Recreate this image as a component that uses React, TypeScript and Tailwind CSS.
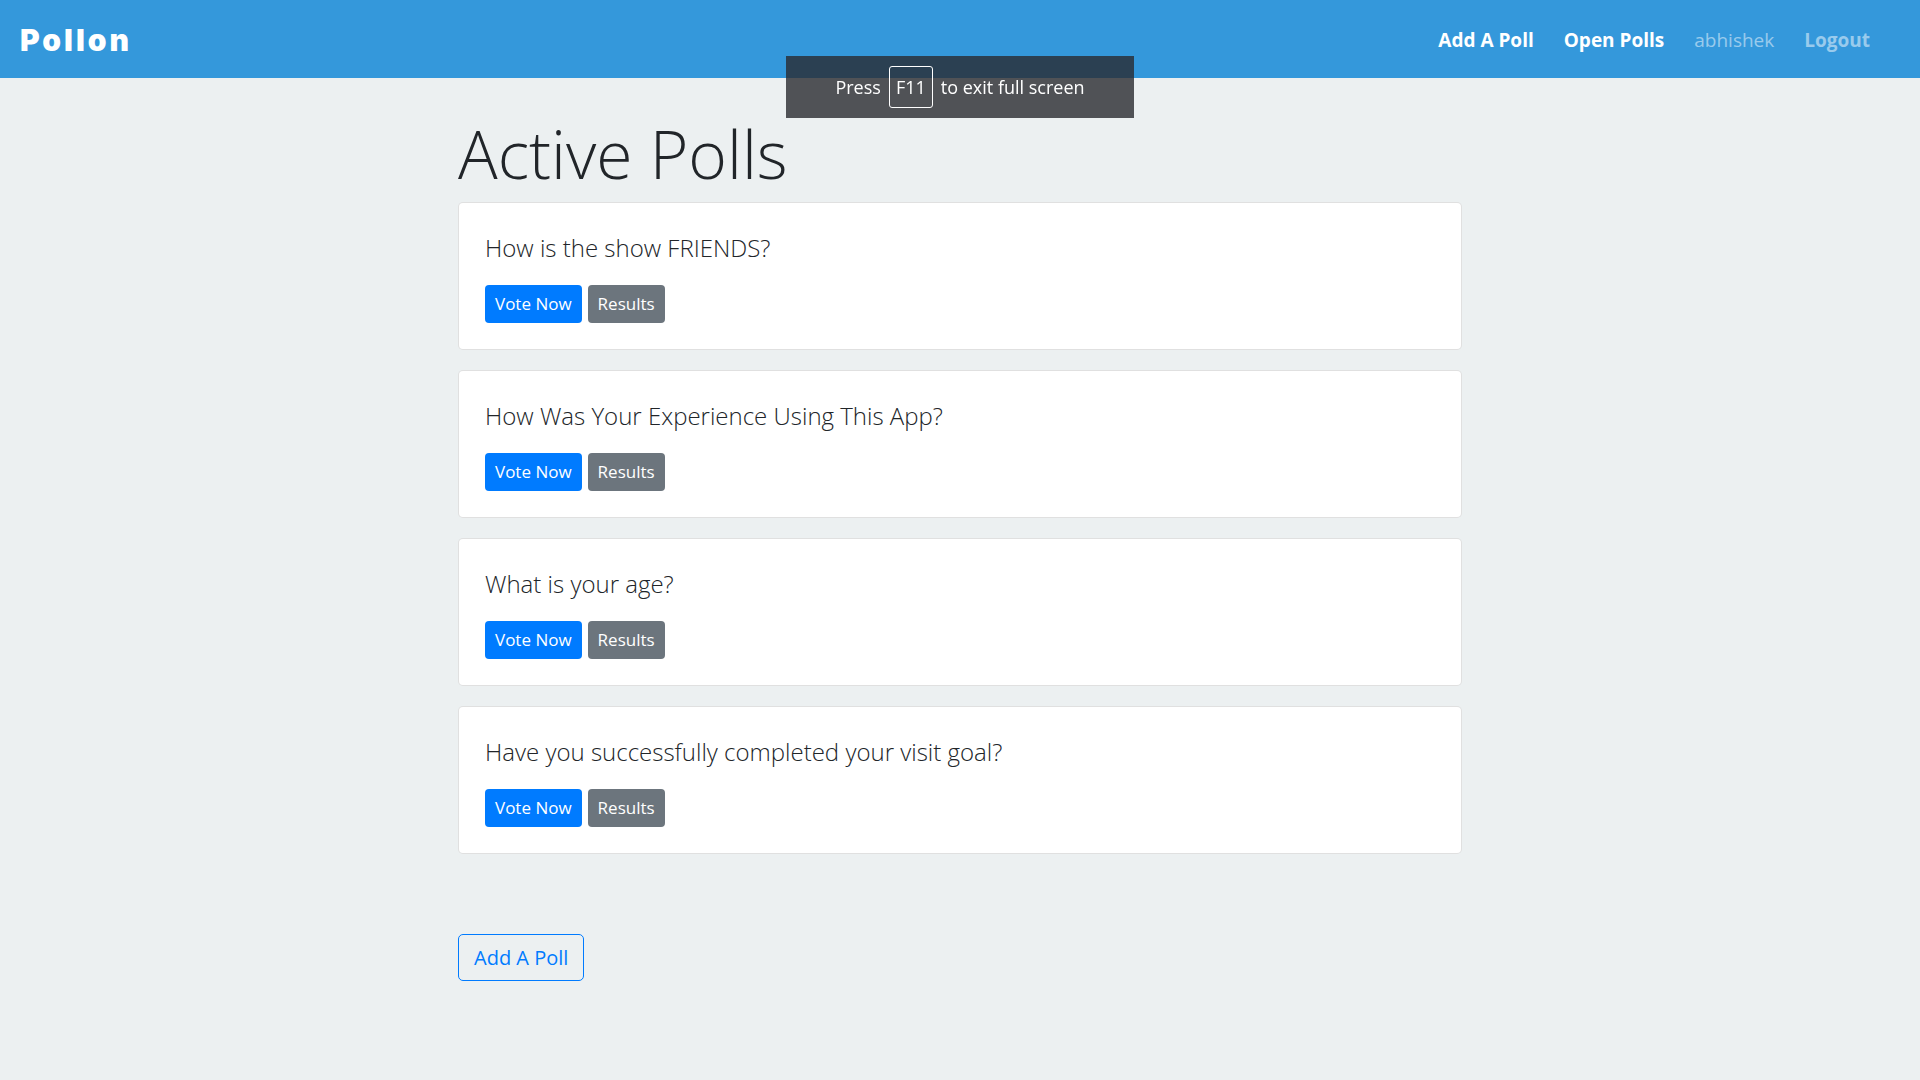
const polls = [
  "How is the show FRIENDS?",
  "How Was Your Experience Using This App?",
  "What is your age?",
  "Have you successfully completed your visit goal?",
];

function PollCard({ question }: { question: string }) {
  return (
    <article className="rounded-[5px] border border-black/12 bg-white p-[26px]">
      <h2 className="mb-[18px] text-[24px] leading-[38px] font-light text-[#212529]">{question}</h2>
      <div className="flex gap-[6px]">
        <button className="h-[38px] rounded-[4px] bg-[#007bff] px-[10px] text-[17px] text-white">Vote Now</button>
        <button className="h-[38px] rounded-[4px] bg-[#6c757d] px-[10px] text-[17px] text-white">Results</button>
      </div>
    </article>
  );
}

export default function App() {
  return (
    <div className="min-h-screen bg-[#ecf0f1] font-['Open_Sans','Noto_Sans',sans-serif] text-[#212529]">
      <header className="flex h-[78px] items-center justify-between bg-[#3498db] px-5 pt-0.5">
        <a href="#home" className="font-['Inter',sans-serif] text-[30px] font-black tracking-widest text-white">Pollon</a>
        <nav className="mr-[30px] flex items-center gap-[30px] text-[19px]">
          <a href="#add" className="font-bold text-white">Add A Poll</a>
          <a href="#open" className="font-bold text-white">Open Polls</a>
          <span className="text-white/50">abhishek</span>
          <a href="#logout" className="font-bold text-white/50">Logout</a>
        </nav>
      </header>
      <div role="status" className="fixed top-14 left-1/2 flex h-[62px] w-[348px] -translate-x-1/2 items-center justify-center gap-2 bg-[#292b2f]/80 text-[18px] text-white">
        <span>Press</span>
        <kbd className="flex h-[42px] w-11 items-center justify-center rounded-[3px] border border-white font-[inherit]">F11</kbd>
        <span>to exit full screen</span>
      </div>
      <main className="mx-auto max-w-[1004px] pt-9 pb-20">
        <h1 className="mb-[10px] text-[66px] leading-[78px] font-light">Active Polls</h1>
        <div className="flex flex-col gap-5">
          {polls.map((q) => <PollCard key={q} question={q} />)}
        </div>
        <button className="mt-20 h-[47px] rounded-[5px] border border-[#007bff] px-[15px] text-[20px] text-[#007bff]">Add A Poll</button>
      </main>
    </div>
  );
}
